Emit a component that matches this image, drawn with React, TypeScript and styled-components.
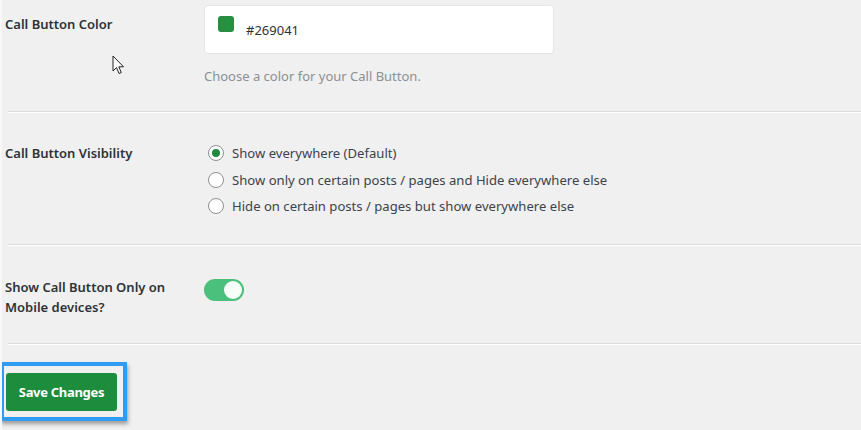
import React from "react";
import styled, { createGlobalStyle } from "styled-components";

const Global = createGlobalStyle`
  html, body { margin: 0; padding: 0; background: #f0f0f0; }
  body { font-family: "Noto Sans", "Open Sans", "Liberation Sans", sans-serif; font-size: 13px; color: #2c3338; }
  * { box-sizing: border-box; }
`;

const Page = styled.div`
  position: relative;
  width: 861px;
  height: 430px;
  overflow: hidden;
  background: #f0f0f0;
  border-left: 2px solid #f7f7f7;
`;

const Row = styled.div<{ $pt: number; $h: number }>`
  display: flex;
  height: ${(p) => p.$h}px;
  padding-top: ${(p) => p.$pt}px;
`;

const Separator = styled.div`
  margin-left: 6px;
  height: 2px;
  border-top: 1px solid #dcdcde;
  border-bottom: 1px solid #ffffff;
`;

const Label = styled.div<{ $mt: number }>`
  width: 202px;
  padding-left: 3px;
  margin-top: ${(p) => p.$mt}px;
  font-weight: 600;
  font-size: 13px;
  line-height: 20px;
  color: #2c3338;
`;

const Field = styled.div`
  display: flex;
  flex-direction: column;
`;

const ColorBox = styled.div`
  width: 350px;
  height: 49px;
  background: #fff;
  border: 1px solid #e6e6e6;
  border-radius: 4px;
  display: flex;
  align-items: flex-start;
  padding: 10px 0 0 13px;
  gap: 12px;
`;

const Swatch = styled.span<{ $c: string }>`
  width: 16px;
  height: 16px;
  border-radius: 3px;
  background: ${(p) => p.$c};
`;

const ColorText = styled.span`
  margin-top: 4px;
  font-size: 13px;
  line-height: 20px;
  color: #2c3338;
`;

const Desc = styled.div`
  margin-top: 12px;
  color: #8c8f94;
  font-size: 13px;
  line-height: 20px;
`;

const RadioList = styled.div`
  display: flex;
  flex-direction: column;
  padding-left: 4px;
`;

const RadioRow = styled.label`
  display: flex;
  align-items: center;
  height: 26.5px;
  gap: 8px;
  color: #3c434a;
  font-size: 13.1px;
`;

const RadioCircle = styled.span<{ $on?: boolean }>`
  width: 16px;
  height: 16px;
  border-radius: 50%;
  border: 1px solid #8c8f94;
  background: #fff;
  display: flex;
  align-items: center;
  justify-content: center;
  &::after {
    content: "";
    width: 8px;
    height: 8px;
    border-radius: 50%;
    background: ${(p) => (p.$on ? "#1f8a40" : "transparent")};
  }
`;

const Toggle = styled.span`
  margin-top: 2px;
  width: 40px;
  height: 22px;
  border-radius: 11px;
  background: #4bbf7c;
  display: flex;
  align-items: center;
  justify-content: flex-end;
  padding-right: 2px;
  &::after {
    content: "";
    width: 18px;
    height: 18px;
    border-radius: 50%;
    background: #f7fff9;
  }
`;

const ButtonArea = styled.div`
  padding-top: 17px;
`;

const Highlight = styled.div`
  display: inline-flex;
  border: 4px solid #2d9cf2;
  padding: 7px 6px 6px 2px;
  box-shadow: 1px 3px 4px rgba(0, 0, 0, 0.35);
  margin-left: -2px;
`;

const SaveButton = styled.button`
  width: 111px;
  height: 38px;
  border: none;
  border-radius: 3px;
  background: #1e8c3d;
  color: #fff;
  font-family: "Noto Sans", "Open Sans", sans-serif;
  font-weight: 700;
  font-size: 13px;
  letter-spacing: -0.3px;
  padding: 0;
`;

const Cursor = styled.svg`
  position: absolute;
  left: 110px;
  top: 55px;
`;

export default function App() {
  return (
    <>
      <Global />
      <Page>
        <Row $pt={5} $h={111}>
          <Label $mt={9}>Call Button Color</Label>
          <Field>
            <ColorBox>
              <Swatch $c="#269041" />
              <ColorText>#269041</ColorText>
            </ColorBox>
            <Desc>Choose a color for your Call Button.</Desc>
          </Field>
        </Row>
        <Separator />
        <Row $pt={27} $h={131}>
          <Label $mt={3}>Call Button Visibility</Label>
          <RadioList>
            <RadioRow><RadioCircle $on />Show everywhere (Default)</RadioRow>
            <RadioRow><RadioCircle />Show only on certain posts / pages and Hide everywhere else</RadioRow>
            <RadioRow><RadioCircle />Hide on certain posts / pages but show everywhere else</RadioRow>
          </RadioList>
        </Row>
        <Separator />
        <Row $pt={31} $h={97}>
          <Label $mt={0}>Show Call Button Only on<br />Mobile devices?</Label>
          <Toggle />
        </Row>
        <Separator />
        <ButtonArea>
          <Highlight>
            <SaveButton>Save Changes</SaveButton>
          </Highlight>
        </ButtonArea>
        <Cursor width="14" height="22" viewBox="0 0 14 22">
          <path d="M1 1 L1 16 L4.5 12.5 L7 18.5 L9.3 17.5 L6.8 11.8 L11.5 11.8 Z" fill="#fff" stroke="#222" strokeWidth="1" strokeLinejoin="round" />
        </Cursor>
      </Page>
    </>
  );
}
